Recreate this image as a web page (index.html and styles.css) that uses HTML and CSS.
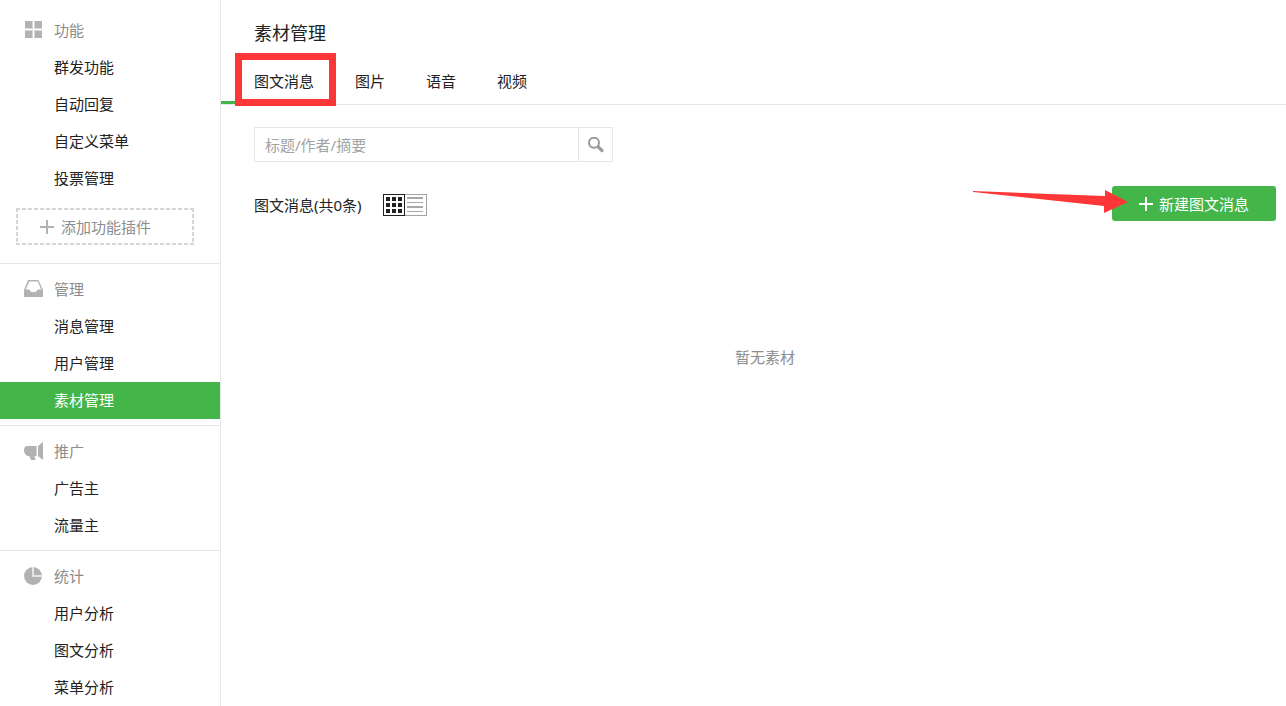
FILE: index.html
```html
<!DOCTYPE html>
<html lang="zh-CN">
<head>
<meta charset="utf-8">
<title>素材管理</title>
<link rel="stylesheet" href="styles.css">
</head>
<body>
<div class="layout">
  <nav class="sidebar">
    <section class="group">
      <h2 class="group-title">
        <svg class="group-icon" viewBox="0 0 20 20"><path fill="#d8d8d8" d="M2 1h17v17H2z"/><path fill="#b2b2b2" d="M2 1h7v7H2zM12 1h7v7h-7zM2 11h7v7H2zM12 11h7v7h-7z"/><path fill="#fff" d="M10 1h1v17h-1zM2 9h17v1H2z"/></svg>
        功能
      </h2>
      <a class="item" href="#">群发功能</a>
      <a class="item" href="#">自动回复</a>
      <a class="item" href="#">自定义菜单</a>
      <a class="item" href="#">投票管理</a>
      <a class="plugin" href="#">
        <svg class="plus" viewBox="0 0 14 14"><path fill="#b2b2b2" d="M6 0h2v6h6v2H8v6H6V8H0V6h6z"/></svg>
        添加功能插件
      </a>
    </section>
    <section class="group">
      <h2 class="group-title">
        <svg class="group-icon" viewBox="0 0 20 20"><path fill="#b2b2b2" fill-rule="evenodd" d="M5 1h10.500L20 11v7H1v-7zM6.200 2.500L2.800 10.500h3.200c1 0 1.200 2.500 2.500 2.500h4c1.300 0 1.500-2.500 2.500-2.500h3.200L14.800 2.500z"/></svg>
        管理
      </h2>
      <a class="item" href="#">消息管理</a>
      <a class="item" href="#">用户管理</a>
      <a class="item item-active" href="#" aria-current="page">素材管理</a>
    </section>
    <section class="group">
      <h2 class="group-title">
        <svg class="group-icon" viewBox="0 0 20 20"><path fill="#b2b2b2" d="M4 5h9v10h-1.500l1 4H8L6.300 15H4.500C2.500 14 1 12 1 9.500S2 5 4 5z"/><path fill="#d0d0d0" d="M13 5h1v10h-1z"/><path fill="#b2b2b2" d="M15 5l5-4v18l-5-4z"/></svg>
        推广
      </h2>
      <a class="item" href="#">广告主</a>
      <a class="item" href="#">流量主</a>
    </section>
    <section class="group">
      <h2 class="group-title">
        <svg class="group-icon" viewBox="0 0 20 20"><circle cx="10" cy="10" r="9" fill="#b2b2b2"/><path fill="#e4e4e4" d="M9 1h2V9h8v2H9z"/></svg>
        统计
      </h2>
      <a class="item" href="#">用户分析</a>
      <a class="item" href="#">图文分析</a>
      <a class="item" href="#">菜单分析</a>
    </section>
  </nav>
  <main class="main">
    <header class="header">
      <h1 class="title">素材管理</h1>
      <div class="tabs">
        <a class="tab tab-active" href="#" aria-current="page">图文消息<span class="highlight"></span></a>
        <a class="tab" href="#">图片</a>
        <a class="tab" href="#">语音</a>
        <a class="tab" href="#">视频</a>
      </div>
    </header>
    <div class="content">
      <form class="search">
        <input class="search-input" type="text" placeholder="标题/作者/摘要" aria-label="标题/作者/摘要">
        <button class="search-button" type="button" aria-label="搜索">
          <svg class="search-icon" viewBox="0 0 16 16"><circle cx="6" cy="5.800" r="5" fill="none" stroke="#9a9a9a" stroke-width="2"/><path d="M10.200 9.800l3.700 3.700" stroke="#9a9a9a" stroke-width="3.200" stroke-linecap="round"/></svg>
        </button>
      </form>
      <div class="toolbar">
        <div class="summary">
          <span class="count">图文消息(共0条)</span>
          <div class="views">
            <button class="view view-active" type="button" aria-label="卡片视图">
              <svg class="view-icon" viewBox="0 0 16 16"><path fill="#222" d="M0 0h4v4H0zM6 0h4v4H6zM12 0h4v4h-4zM0 6h4v4H0zM6 6h4v4H6zM12 6h4v4h-4zM0 12h4v4H0zM6 12h4v4H6zM12 12h4v4h-4z"/></svg>
            </button>
            <button class="view" type="button" aria-label="列表视图">
              <svg class="view-icon" viewBox="0 0 16 16"><path fill="#a8a8a8" d="M0 0h16v2H0zM0 5h16v1H0zM0 9h16v2H0zM0 14h16v1H0z"/></svg>
            </button>
          </div>
        </div>
        <button class="create" type="button">
          <svg class="plus" viewBox="0 0 14 14"><path fill="#fff" d="M6 0h2v6h6v2H8v6H6V8H0V6h6z"/></svg>
          新建图文消息
          <svg class="arrow" viewBox="0 0 156 24"><path fill="#fd3737" d="M1 2v-1L133 6V0l23 12-24 11v-7z"/></svg>
        </button>
      </div>
      <p class="empty">暂无素材</p>
    </div>
  </main>
</div>
</body>
</html>
```
FILE: styles.css
```css
* {
  box-sizing: border-box;
}

body {
  margin: 0;
  background: #fff;
  color: #222;
  font-family: "Noto Sans", "Noto Sans CJK SC", sans-serif;
  font-size: 15px;
  line-height: 24px;
}

a {
  color: inherit;
  text-decoration: none;
}

button,
input {
  margin: 0;
  padding: 0;
  border: 0;
  background: none;
  color: inherit;
  font: inherit;
}

.layout {
  display: flex;
  min-height: 100vh;
}

.sidebar {
  flex: 0 0 221px;
  border-right: 1px solid #e7e7eb;
}

.group {
  padding: 7px 0 6px;
  border-top: 1px solid #e7e7eb;
}

.group:first-child {
  padding: 12px 0 18px;
  border-top: 0;
}

.group:last-child {
  padding-bottom: 0;
}

.group-title {
  display: flex;
  align-items: center;
  gap: 11px;
  height: 37px;
  margin: 0;
  padding: 0 0 1px 23px;
  color: #8d8d8d;
  font-size: 15px;
  font-weight: 400;
}

.group-icon {
  width: 20px;
  height: 20px;
}

.item {
  display: block;
  padding-left: 54px;
  line-height: 37px;
}

.item-active {
  background: #44b549;
  color: #fff;
}

.plugin {
  --dash: #d5d5d5 0 4px, transparent 4px 6px;
  display: flex;
  align-items: center;
  gap: 7px;
  height: 37px;
  margin: 11px 26px 0 16px;
  padding-left: 24px;
  background:
    repeating-linear-gradient(90deg, var(--dash)) top / 100% 2px no-repeat,
    repeating-linear-gradient(90deg, var(--dash)) bottom / 100% 2px no-repeat,
    repeating-linear-gradient(var(--dash)) left / 2px 100% no-repeat,
    repeating-linear-gradient(var(--dash)) right / 2px 100% no-repeat;
  color: #8d8d8d;
}

.plus {
  width: 14px;
  height: 14px;
}

.main {
  flex: 1;
  min-width: 0;
}

.header {
  padding-top: 20px;
  border-bottom: 1px solid #e7e7eb;
}

.title {
  margin: 0;
  padding-left: 33px;
  font-size: 18px;
  font-weight: 400;
  line-height: 26px;
}

.tabs {
  display: flex;
  gap: 1px;
  margin-top: 10px;
}

.tab {
  height: 48px;
  padding: 0 20px;
  line-height: 50px;
}

.tab-active {
  position: relative;
  padding-left: 33px;
  border-bottom: 3px solid #44b549;
}

.highlight {
  position: absolute;
  inset: -3px -2px -5px 14px;
  border: 7px solid #fd3737;
}

.content {
  padding: 22px 10px 0 33px;
}

.search {
  display: flex;
  width: 359px;
  height: 35px;
  border: 1px solid #e7e7eb;
}

.search-input {
  flex: 1;
  min-width: 0;
  padding: 0 10px;
}

.search-input::placeholder {
  color: #a3a3a3;
}

.search-button {
  display: flex;
  align-items: center;
  justify-content: center;
  width: 34px;
  border-left: 1px solid #e7e7eb;
}

.search-icon {
  width: 16px;
  height: 16px;
}

.toolbar {
  display: flex;
  align-items: center;
  margin-top: 24px;
}

.summary {
  display: flex;
  align-items: center;
  gap: 21px;
  padding-top: 3px;
}

.views {
  display: flex;
}

.view {
  display: flex;
  align-items: center;
  justify-content: center;
  width: 22px;
  height: 22px;
  border: 1px solid #a3a3a3;
  border-left: 0;
}

.view-active {
  border: 1px solid #222;
}

.view-icon {
  width: 16px;
  height: 16px;
}

.create {
  position: relative;
  display: flex;
  align-items: center;
  justify-content: center;
  gap: 6px;
  width: 164px;
  height: 35px;
  margin-left: auto;
  border-radius: 3px;
  background: #44b549;
  color: #fff;
}

.arrow {
  position: absolute;
  top: 4px;
  right: 148px;
  width: 156px;
  height: 24px;
}

.empty {
  margin: 124px 0 0;
  color: #8d8d8d;
  text-align: center;
}
```
